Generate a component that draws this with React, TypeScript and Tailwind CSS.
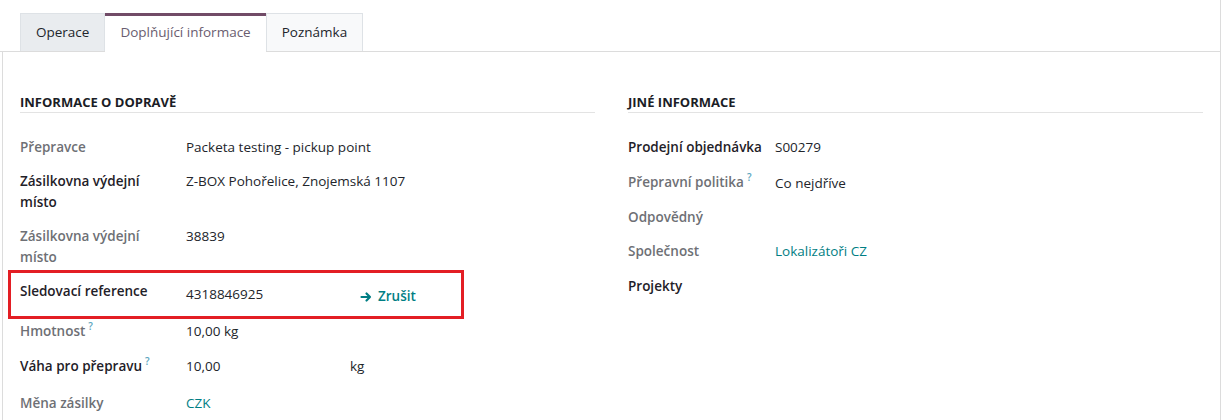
import React from "react";

const Q = () => (
  <span className="ml-[3px] text-[10px] leading-none font-semibold text-[#5aa5bd] relative -top-[6px]">?</span>
);

function Row({
  label,
  bold,
  children,
  className = "pt-[6px]",
}: {
  label: React.ReactNode;
  bold?: boolean;
  children?: React.ReactNode;
  className?: string;
}) {
  return (
    <div className={"flex pb-[7px] leading-[21px] " + className}>
      <div
        className={
          "w-[166px] shrink-0 pr-2 font-semibold " +
          (bold ? "text-[#1f2128]" : "text-[#6e7075]")
        }
      >
        {label}
      </div>
      <div className="flex-1 text-[#22252b]">{children}</div>
    </div>
  );
}

function RRow({
  label,
  bold,
  children,
  className = "pt-[6px]",
}: {
  label: React.ReactNode;
  bold?: boolean;
  children?: React.ReactNode;
  className?: string;
}) {
  return (
    <div className={"flex pb-[7px] leading-[21px] " + className}>
      <div
        className={
          "w-[147px] shrink-0 font-semibold " +
          (bold ? "text-[#1f2128]" : "text-[#6e7075]")
        }
      >
        {label}
      </div>
      <div className="flex-1 text-[#22252b]">{children}</div>
    </div>
  );
}

export default function App() {
  return (
    <div
      className="w-[1221px] h-[420px] bg-white overflow-hidden text-[13.5px]"
      style={{ fontFamily: '"Open Sans", "Noto Sans", sans-serif' }}
    >
      <div className="h-full border-r border-[#dcdcdc] ml-[3px] w-[1218px] flex flex-col">
        {/* tabs */}
        <div className="flex pl-[20px] pt-[13px] border-b border-[#dcdcdc] -ml-[3px] w-[1221px]">
          <div className="h-[38px] px-[15px] flex items-center bg-[#e9ecef] border border-[#dee2e6] border-b-0 text-[#22252b] -mb-px">
            Operace
          </div>
          <div className="h-[39px] px-[15px] flex items-center bg-white border-t-[3px] border-[#714b67] text-[#6a5d70] -mb-px pb-[3px] relative z-10">
            Doplňující informace
          </div>
          <div className="h-[38px] px-[15px] flex items-center bg-[#f8f9fa] border border-[#dee2e6] border-b-0 text-[#22252b] -mb-px">
            Poznámka
          </div>
        </div>
        {/* body */}
        <div className="flex-1 border-l border-[#dcdcdc] -ml-px pl-[17px] pr-[17px] pt-[42px] grid grid-cols-2 gap-[33px]">
          <div>
            <div className="font-bold text-[13px] text-[#1b1d26] uppercase leading-[16px] pb-[2px] border-b border-[#e3e3e3]">
              INFORMACE O DOPRAVĚ
            </div>
            <div className="pt-[18px]">
              <Row label="Přepravce">Packeta testing - pickup point</Row>
              <Row label={<>Zásilkovna výdejní<br />místo</>} bold>
                Z-BOX Pohořelice, Znojemská 1107
              </Row>
              <Row label={<>Zásilkovna výdejní<br />místo</>}>38839</Row>
              <div className="-ml-[12px] -mt-[5px] w-[456px] h-[49px] border-[3px] border-[#e31e24] flex pl-[9px] pt-[8px] leading-[21px]">
                <div className="w-[166px] shrink-0 font-semibold text-[#1f2128]">Sledovací reference</div>
                <div className="w-[174px] shrink-0 pt-[3px] text-[#22252b]">4318846925</div>
                <div className="font-semibold text-[#017e84] flex items-center gap-[6px] h-[21px] mt-[5px]">
                  <svg width="12" height="12" viewBox="0 0 12 12" fill="none" stroke="#017e84" strokeWidth="2.2" strokeLinecap="round" strokeLinejoin="round">
                    <path d="M1.5 6h8.5M6.5 2.5L10 6l-3.5 3.5" />
                  </svg>
                  Zrušit
                </div>
              </div>
              <Row label={<>Hmotnost<Q /></>} className="pt-[2px]">10,00 kg</Row>
              <Row label={<>Váha pro přepravu<Q /></>} bold className="pt-[7px]">
                <div className="flex">
                  <span className="w-[164px]">10,00</span>
                  <span>kg</span>
                </div>
              </Row>
              <Row label="Měna zásilky" className="pt-[9px]">
                <span className="text-[#017e84]">CZK</span>
              </Row>
            </div>
          </div>
          <div>
            <div className="font-bold text-[13px] text-[#1b1d26] uppercase leading-[16px] pb-[2px] border-b border-[#e3e3e3]">
              JINÉ INFORMACE
            </div>
            <div className="pt-[18px]">
              <RRow label="Prodejní objednávka" bold>S00279</RRow>
              <RRow label={<>Přepravní politika<Q /></>} className="pt-[7px]">
                <span className="relative top-[1px]">Co nejdříve</span>
              </RRow>
              <RRow label="Odpovědný" className="pt-[7px]"></RRow>
              <RRow label="Společnost">
                <span className="text-[#017e84]">Lokalizátoři CZ</span>
              </RRow>
              <RRow label="Projekty" bold className="pt-[7px]"></RRow>
            </div>
          </div>
        </div>
      </div>
    </div>
  );
}
